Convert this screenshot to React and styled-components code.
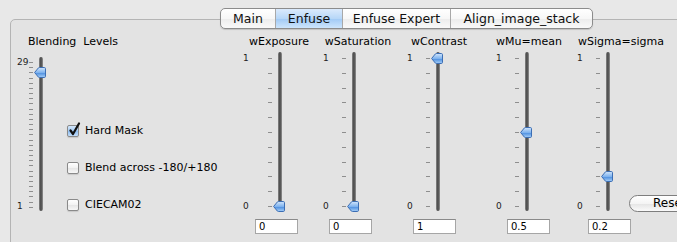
import React from "react";
import styled, { createGlobalStyle } from "styled-components";

const GlobalStyle = createGlobalStyle`
  html, body {
    margin: 0;
    padding: 0;
    background: #e8e8e8;
    overflow: hidden;
  }
  body {
    font-family: "DejaVu Sans", "Liberation Sans", sans-serif;
    color: #000;
  }
`;

const Window = styled.div`
  width: 677px;
  height: 242px;
  padding: 8px 0 0 10px;
  box-sizing: border-box;
  overflow: hidden;
`;

const TabBar = styled.div`
  position: relative;
  z-index: 1;
  display: flex;
  width: max-content;
  margin: 0 0 -10px 210px;
  height: 21px;
  box-sizing: border-box;
  border: 1px solid #8c8c8c;
  border-radius: 5px;
  overflow: hidden;
  background: linear-gradient(#ffffff, #f7f7f7 50%, #ececec 51%, #f9f9f9);
  box-shadow: 0 1px 1px rgba(0, 0, 0, 0.15);
`;

const Tab = styled.div`
  width: ${(p) => p.$w}px;
  display: flex;
  align-items: center;
  justify-content: center;
  font-size: 12.5px;
  color: #111;
  border-left: ${(p) => (p.$first ? "none" : "1px solid #a8a8a8")};
  background: ${(p) =>
    p.$active
      ? "linear-gradient(#dbeafc, #b7d7f8 50%, #a0c9f5 51%, #cde5fc)"
      : "transparent"};
`;

const GroupBox = styled.div`
  width: 700px;
  height: 240px;
  box-sizing: border-box;
  border: 1px solid #b4b4b4;
  border-radius: 5px;
  background: #e3e3e3;
  padding: 15px 0 0 6px;
  display: flex;
  align-items: flex-start;
`;

const BlendSection = styled.div`
  width: 226px;
  display: flex;
  flex-direction: column;
`;

const SectionTitle = styled.div`
  height: 14px;
  line-height: 14px;
  font-size: 11px;
  white-space: pre;
  margin-left: ${(p) => p.$indent || 0}px;
`;

const CenteredTitle = styled.div`
  height: 14px;
  line-height: 14px;
  font-size: 11px;
  white-space: nowrap;
  text-align: center;
  width: ${(p) => p.$center * 2}px;
`;

const BlendRow = styled.div`
  display: flex;
  margin-top: 8px;
  height: 155px;
`;

const SliderRow = styled.div`
  display: flex;
  height: ${(p) => p.$h}px;
  margin-top: ${(p) => p.$mt || 0}px;
`;

const ScaleLabels = styled.div`
  width: ${(p) => p.$w}px;
  display: flex;
  flex-direction: column;
  justify-content: space-between;
  padding: ${(p) => p.$top - 5}px 0 ${(p) => p.$bottom - 5}px;
  font-size: 9px;
  line-height: 11px;
  color: #222;
`;

const Ticks = styled.div`
  width: 4px;
  display: flex;
  flex-direction: column;
  justify-content: space-between;
  padding: ${(p) => p.$top}px 0 ${(p) => p.$bottom}px;
`;

const Tick = styled.div`
  height: 1px;
  width: 4px;
  background: #8e8e8e;
`;

const Track = styled.div`
  position: relative;
  width: 4px;
  margin-left: 6px;
  height: calc(100% - 1px);
  border-radius: 2px;
  background: linear-gradient(90deg, #8a8a8a, #4e4e4e 40%, #5c5c5c 70%, #9a9a9a);
`;

const ThumbWrap = styled.div`
  position: absolute;
  left: -5px;
  width: 12px;
  height: 11px;
  line-height: 0;
`;

const ValueInput = styled.div`
  margin-top: 7px;
  margin-left: ${(p) => p.$x}px;
  width: 43px;
  height: 15px;
  box-sizing: border-box;
  background: #fff;
  border: 1px solid #a6a6a6;
  border-top-color: #8a8a8a;
  font-size: 10px;
  line-height: 13px;
  padding-left: 3px;
`;

const WeightColumn = styled.div`
  width: ${(p) => p.$w}px;
  flex: none;
  display: flex;
  flex-direction: column;
`;

const CheckList = styled.div`
  margin-left: 24px;
  display: flex;
  flex-direction: column;
  justify-content: flex-end;
  gap: 24px;
  padding-bottom: 1px;
`;

const CheckRow = styled.label`
  display: flex;
  align-items: center;
  height: 13px;
  gap: 6px;
  font-size: 11px;
  white-space: nowrap;
`;

const Box = styled.span`
  position: relative;
  width: 12px;
  height: 12px;
  box-sizing: border-box;
  border: 1px solid #8a8a8a;
  border-radius: 2px;
  background: ${(p) =>
    p.$checked
      ? "linear-gradient(#d4e7fb, #a4cbf4 50%, #8cbcf0 51%, #c2defb)"
      : "linear-gradient(#ffffff, #f2f2f2 50%, #e6e6e6 51%, #f7f7f7)"};
  box-shadow: 0 1px 1px rgba(0, 0, 0, 0.12);
`;

const CheckMark = styled.svg`
  position: absolute;
  left: 0px;
  top: -4px;
`;

const ResetButton = styled.div`
  margin-top: 160px;
  width: 70px;
  height: 17px;
  box-sizing: border-box;
  border: 1px solid #7e7e7e;
  border-radius: 9px;
  background: linear-gradient(#ffffff, #f4f4f4 50%, #e4e4e4 51%, #fafafa);
  font-size: 12px;
  line-height: 15px;
  padding-left: 23px;
  flex: none;
`;

function Thumb({ top }) {
  return (
    <ThumbWrap style={{ top }}>
      <svg width="12" height="11" viewBox="0 0 12 11">
        <defs>
          <linearGradient id="thumbFill" x1="0" y1="0" x2="0" y2="1">
            <stop offset="0" stopColor="#d2e6fc" />
            <stop offset="0.5" stopColor="#7fb3ee" />
            <stop offset="0.55" stopColor="#4f90e0" />
            <stop offset="1" stopColor="#a8d0f8" />
          </linearGradient>
        </defs>
        <path
          d="M0.6 5.5 L4.3 1 Q4.7 0.5 5.4 0.5 H10.3 Q11.5 0.5 11.5 1.7 V9.3 Q11.5 10.5 10.3 10.5 H5.4 Q4.7 10.5 4.3 10 Z"
          fill="url(#thumbFill)"
          stroke="#3c6eb4"
          strokeWidth="1"
        />
      </svg>
    </ThumbWrap>
  );
}

function VSlider({ height, top, bottom, count, frac, labels, labelWidth, mt }) {
  const span = height - top - bottom - 1;
  const center = top + 0.5 + (1 - frac) * span;
  return (
    <SliderRow $h={height} $mt={mt}>
      <ScaleLabels $w={labelWidth} $top={top} $bottom={bottom}>
        <span>{labels[0]}</span>
        <span>{labels[1]}</span>
      </ScaleLabels>
      <Ticks $top={top} $bottom={bottom}>
        {Array.from({ length: count }, (_, i) => (
          <Tick key={i} />
        ))}
      </Ticks>
      <Track>
        <Thumb top={center - 5.5} />
      </Track>
    </SliderRow>
  );
}

function Check({ checked, children }) {
  return (
    <CheckRow>
      <Box $checked={checked}>
        {checked && (
          <CheckMark width="13" height="14" viewBox="0 0 13 14">
            <path
              d="M2.5 8.5 L5 12 L11 1.5"
              fill="none"
              stroke="#111"
              strokeWidth="2.2"
              strokeLinecap="round"
              strokeLinejoin="round"
            />
          </CheckMark>
        )}
      </Box>
      {children}
    </CheckRow>
  );
}

const weights = [
  { name: "wExposure", w: 80, labelW: 25, center: 36, input: 12, value: 0, text: "0" },
  { name: "wSaturation", w: 84, labelW: 19, center: 35, input: 6, value: 0, text: "0" },
  { name: "wContrast", w: 89, labelW: 19, center: 32, input: 6, value: 1, text: "1" },
  { name: "wMu=mean", w: 81, labelW: 19, center: 32, input: 11, value: 0.5, text: "0.5" },
  { name: "wSigma=sigma", w: 52, labelW: 19, center: 44, input: 11, value: 0.2, text: "0.2" },
];

export default function App() {
  return (
    <Window>
      <GlobalStyle />
      <TabBar>
        <Tab $w={54} $first>Main</Tab>
        <Tab $w={66} $active>Enfuse</Tab>
        <Tab $w={107}>Enfuse Expert</Tab>
        <Tab $w={141}>Align_image_stack</Tab>
      </TabBar>
      <GroupBox>
        <BlendSection>
          <SectionTitle $indent={11}>Blending  Levels</SectionTitle>
          <BlendRow>
            <VSlider
              height={155}
              top={5}
              bottom={4}
              count={29}
              frac={26 / 28}
              labels={["29", "1"]}
              labelWidth={12}
            />
            <CheckList>
              <Check checked>Hard Mask</Check>
              <Check>Blend across -180/+180</Check>
              <Check>CIECAM02</Check>
            </CheckList>
          </BlendRow>
        </BlendSection>
        {weights.map((c) => (
          <WeightColumn key={c.name} $w={c.w}>
            <CenteredTitle $center={c.center}>{c.name}</CenteredTitle>
            <VSlider
              height={160}
              top={6}
              bottom={5}
              count={11}
              frac={c.value}
              labels={["1", "0"]}
              labelWidth={c.labelW}
              mt={3}
            />
            <ValueInput $x={c.input}>{c.text}</ValueInput>
          </WeightColumn>
        ))}
        <ResetButton>Reset</ResetButton>
      </GroupBox>
    </Window>
  );
}
